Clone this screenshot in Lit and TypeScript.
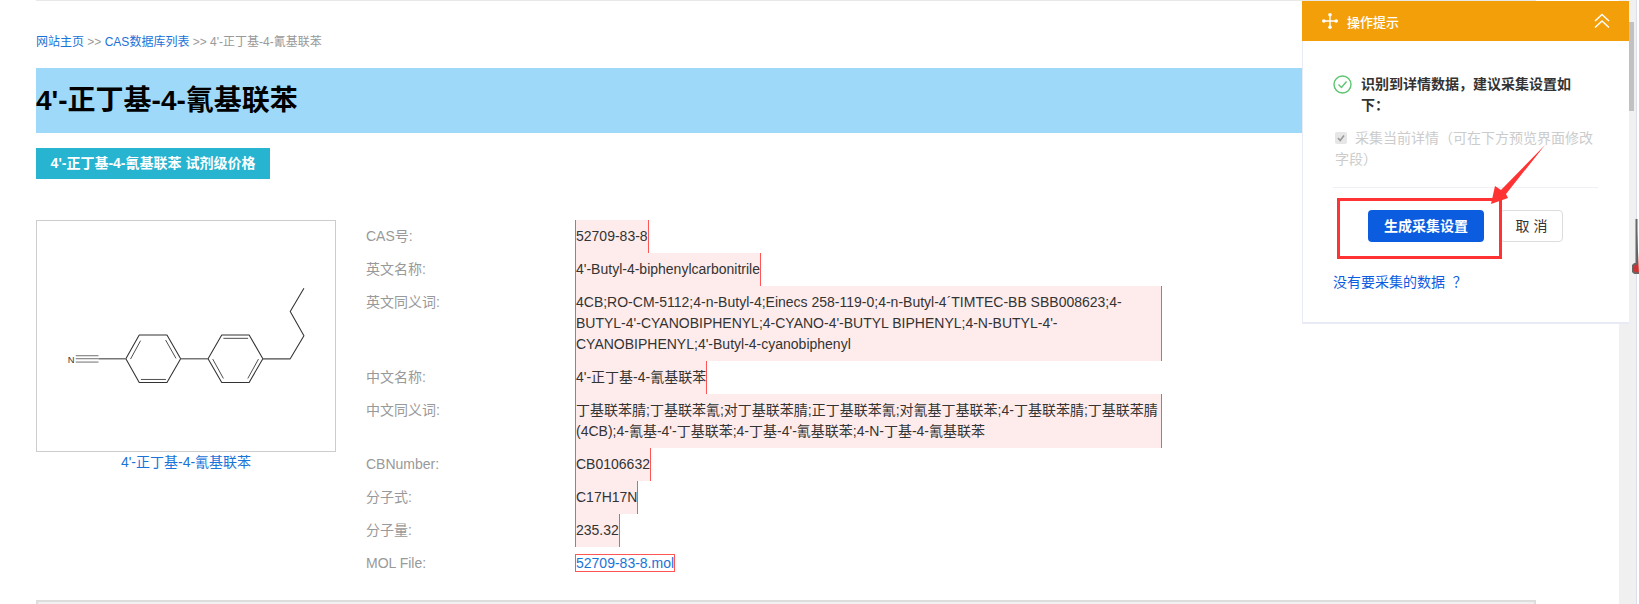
import { LitElement, html, css, svg } from "lit";
import { customElement } from "lit/decorators.js";

const rows: { label: string; value: string }[] = [
  { label: "CAS号:", value: "52709-83-8" },
  { label: "英文名称:", value: "4'-Butyl-4-biphenylcarbonitrile" },
  {
    label: "英文同义词:",
    value:
      "4CB;RO-CM-5112;4-n-Butyl-4;Einecs 258-119-0;4-n-Butyl-4´TIMTEC-BB SBB008623;4-BUTYL-4'-CYANOBIPHENYL;4-CYANO-4'-BUTYL BIPHENYL;4-N-BUTYL-4'-CYANOBIPHENYL;4'-Butyl-4-cyanobiphenyl",
  },
  { label: "中文名称:", value: "4'-正丁基-4-氰基联苯" },
  {
    label: "中文同义词:",
    value:
      "丁基联苯腈;丁基联苯氰;对丁基联苯腈;正丁基联苯氰;对氰基丁基联苯;4-丁基联苯腈;丁基联苯腈(4CB);4-氰基-4'-丁基联苯;4-丁基-4'-氰基联苯;4-N-丁基-4-氰基联苯",
  },
  { label: "CBNumber:", value: "CB0106632" },
  { label: "分子式:", value: "C17H17N" },
  { label: "分子量:", value: "235.32" },
];

const molecule = svg`
  <g fill="none" stroke="#333" stroke-width="3.2" stroke-linejoin="round">
    <path d="M318 446L358 375H441L482 446L441 517H358Z"/>
    <path d="M332 447L362 392M437 390L468 445M363 508H438" stroke-width="2.6"/>
    <path d="M564 446L605 375H687L728 446L687 517H605Z"/>
    <path d="M610 385H684M578 447L610 505M715 447L683 505" stroke-width="2.6"/>
    <path d="M728 446H810L851 377L810 305L851 235"/>
  </g>
  <path d="M482 446H564M236 446H318M728 446H810" stroke="#777" stroke-width="5" fill="none"/>
  <path d="M168 437H236M168 456H236M168 446H236" stroke="#666" stroke-width="2.8" fill="none"/>
  <text x="144" y="458" font-size="28" fill="#333" font-family="Liberation Sans, sans-serif">N</text>
`;

@customElement("app-root")
export class AppRoot extends LitElement {
  static styles = css`
    :host {
      display: block;
      position: relative;
      height: 604px;
      overflow: hidden;
      background: #fff;
      font-family: "Liberation Sans", "Noto Sans CJK SC", sans-serif;
      font-size: 14px;
      color: #333;
    }
    a { color: #1a73d8; text-decoration: none; }
    .page {
      margin-left: 36px;
      width: 1500px;
      border-top: 1px solid #e8e8e8;
    }
    .crumbs {
      padding-top: 33px;
      height: 34px;
      box-sizing: content-box;
      font-size: 12px;
      line-height: 16px;
      color: #999;
    }
    .title {
      margin: 0;
      height: 65px;
      background: #9fd9f9;
      font-size: 28px;
      font-weight: 700;
      line-height: 66px;
      color: #000;
    }
    .price {
      margin-top: 15px;
      width: 234px;
      height: 31px;
      background: #26b4d0;
      color: #fff;
      font-weight: 700;
      line-height: 31px;
      text-align: center;
    }
    .main {
      display: flex;
      gap: 30px;
      margin-top: 41px;
    }
    .figure { width: 300px; flex: none; }
    .image {
      box-sizing: border-box;
      width: 300px;
      height: 232px;
      border: 1px solid #ccc;
    }
    .image svg { display: block; width: 100%; height: 100%; }
    .caption { display: block; text-align: center; line-height: 20px; }
    .rows { flex: 1; }
    .row { display: flex; }
    .label {
      flex: none;
      width: 209px;
      padding: 6px 0;
      line-height: 21px;
      color: #999;
    }
    .value {
      box-sizing: border-box;
      max-width: 587px;
      padding: 6px 0;
      line-height: 21px;
      background: #feecec;
      border-left: 1px solid #f55;
      border-right: 1px solid #f55;
      word-break: normal;
    }
    .file { padding: 6px 0; line-height: 21px; margin-left: 0; }
    .file a { border: 1px solid #f55; }
    .foot {
      margin-top: 20px;
      height: 10px;
      background: #f0f0f0;
      border: 1px solid #ddd;
      border-width: 2px 2px 0 2px;
    }

    /* browser scrollbar and the widget at the page edge */
    .scroll {
      position: absolute;
      left: 1619px;
      top: 0;
      width: 17px;
      height: 604px;
      background: #f0f0f0;
      border-right: 1px solid #dde;
    }
    .thumb {
      position: absolute;
      left: 2px;
      top: 22px;
      width: 13px;
      height: 89px;
      background: #c1c1c1;
    }
    .gauge { position: absolute; left: 1632px; top: 218px; }

    /* floating hint panel */
    .panel {
      position: absolute;
      left: 1302px;
      top: 1px;
      width: 327px;
      height: 323px;
      box-sizing: border-box;
      background: #fff;
      border-left: 1px solid #e8ebf5;
      border-bottom: 2px solid #e8ebf5;
    }
    .head {
      display: flex;
      align-items: center;
      height: 40px;
      margin-left: -1px;
      padding: 0 19px 0 20px;
      background: #f39f0a;
      color: #fff;
      font-size: 13px;
      font-weight: 500;
    }
    .head .name { margin-left: 9px; flex: 1; }
    .head svg { display: block; }
    .body { padding: 33px 31px 0 30px; width: 265px; box-sizing: content-box; }
    .ok { display: flex; gap: 9px; line-height: 21px; font-weight: 700; color: #333; font-size: 14px; }
    .ok svg { flex: none; margin-top: 1px; }
    .ok span { width: 215px; }
    .opt { margin-top: 12px; padding-left: 2px; line-height: 21px; color: #ccc; }
    .box {
      display: inline-block;
      width: 12px;
      height: 12px;
      margin-right: 8px;
      vertical-align: -1px;
      border-radius: 2px;
      background: #e6e6e6;
      position: relative;
    }
    .box svg { position: absolute; left: 1px; top: 1px; }
    .rule { margin-top: 17px; height: 1px; background: #eef0f6; }
    .btns { display: flex; gap: 16px; margin: 22px 0 0 35px; }
    .primary, .ghost {
      box-sizing: border-box;
      height: 32px;
      line-height: 32px;
      border-radius: 4px;
      text-align: center;
    }
    .primary { width: 116px; background: #0b5cdf; color: #fff; font-weight: 700; }
    .ghost { width: 63px; border: 1px solid #ddd; line-height: 30px; color: #333; }
    .none { display: block; margin-top: 30px; line-height: 21px; color: #0b5cdf; }

    /* red annotation drawn over the screenshot */
    .mark {
      position: absolute;
      left: 1337px;
      top: 198px;
      width: 165px;
      height: 61px;
      box-sizing: border-box;
      border: 3px solid #f33;
    }
    .arrow { position: absolute; left: 1480px; top: 140px; }
  `;

  render() {
    return html`
      <div class="page">
        <div class="crumbs">
          <a href="#">网站主页</a> &gt;&gt; <a href="#">CAS数据库列表</a> &gt;&gt; 4'-正丁基-4-氰基联苯
        </div>
        <h1 class="title">4'-正丁基-4-氰基联苯</h1>
        <div class="price">4'-正丁基-4-氰基联苯 试剂级价格</div>
        <div class="main">
          <div class="figure">
            <div class="image">
              <svg viewBox="52 34 892 688" preserveAspectRatio="none">${molecule}</svg>
            </div>
            <a class="caption" href="#">4'-正丁基-4-氰基联苯</a>
          </div>
          <div class="rows">
            ${rows.map(
              (r) => html`<div class="row">
                <div class="label">${r.label}</div>
                <div class="value">${r.value}</div>
              </div>`
            )}
            <div class="row">
              <div class="label">MOL File:</div>
              <div class="file"><a href="#">52709-83-8.mol</a></div>
            </div>
          </div>
        </div>
        <div class="foot"></div>
      </div>

      <div class="scroll"><div class="thumb"></div></div>
      <svg class="gauge" width="7" height="56" viewBox="0 0 7 56">
        <path d="M4.5 1V45.5A5 5 0 1 0 7 55" fill="#c33" stroke="#666" stroke-width="2"/>
      </svg>

      <div class="panel">
        <div class="head">
          <svg width="16" height="16" viewBox="0 0 16 16" fill="none" stroke="#fff" stroke-width="1.4">
            <path d="M8 1.5V14.5M1.5 8H14.5"/>
            <g fill="#fff" stroke="none">
              <circle cx="8" cy="1.8" r="1.8"/><circle cx="8" cy="14.2" r="1.8"/>
              <circle cx="1.8" cy="8" r="1.8"/><circle cx="14.2" cy="8" r="1.8"/>
            </g>
          </svg>
          <span class="name">操作提示</span>
          <svg width="16" height="16" viewBox="0 0 16 16" fill="none" stroke="#fff" stroke-width="1.5">
            <path d="M1 8L8 1.5L15 8M1 14.5L8 8L15 14.5"/>
          </svg>
        </div>
        <div class="body">
          <div class="ok">
            <svg width="19" height="19" viewBox="0 0 19 19" fill="none" stroke="#5cc46f" stroke-width="1.4">
              <circle cx="9.5" cy="9.5" r="8.5"/>
              <path d="M5.5 9.5L8.5 12.5L13.5 6.5"/>
            </svg>
            <span>识别到详情数据，建议采集设置如下：</span>
          </div>
          <div class="opt">
            <span class="box"><svg width="10" height="10" viewBox="0 0 10 10" fill="none" stroke="#999" stroke-width="1.6"><path d="M2 5L4.2 7.5L8 2.5"/></svg></span>采集当前详情（可在下方预览界面修改字段）
          </div>
          <div class="rule"></div>
          <div class="btns">
            <div class="primary">生成采集设置</div>
            <div class="ghost">取 消</div>
          </div>
          <a class="none" href="#">没有要采集的数据&nbsp; ？</a>
        </div>
      </div>

      <div class="mark"></div>
      <svg class="arrow" width="70" height="70" viewBox="1480 140 70 70">
        <path d="M1545 145L1506 194L1508 198L1491 204L1495 186L1501 190Z" fill="#f33"/>
      </svg>
    `;
  }
}
